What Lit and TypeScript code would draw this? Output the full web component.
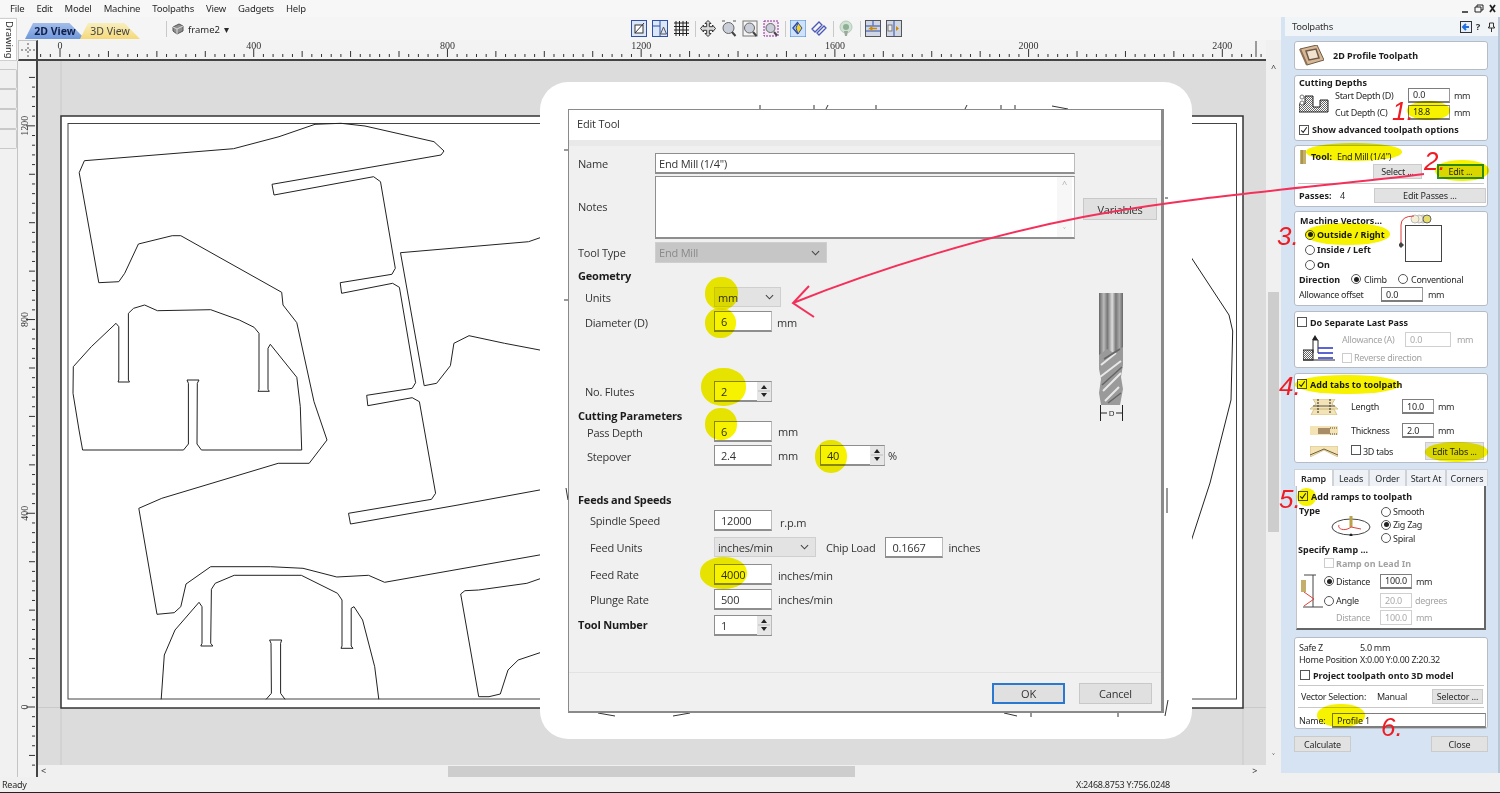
import { LitElement, html, svg, css, unsafeCSS } from 'lit';
import { customElement } from 'lit/decorators.js';

// small spacing helpers, used for the many one-off offsets in this dense form
let util = '';
for (let n = 0; n <= 500; n++) {
  util += `.w${n}{width:${n}px;flex:none}.h${n}{height:${n}px;flex:none}.ml${n}{margin-left:${n}px}.mt${n}{margin-top:${n}px}`;
}

const MENU = ['File', 'Edit', 'Model', 'Machine', 'Toolpaths', 'View', 'Gadgets', 'Help'];

// yellow marker blobs: x, y, w, h in page pixels
const MARKS = [
  [1407, 101, 43, 19], [1306, 143, 96, 18], [1435, 160, 54, 21], [1305, 223, 85, 22],
  [1295, 375, 105, 19], [1425, 442, 63, 20], [1297, 488, 19, 18], [1317, 704, 48, 23],
  [705, 277, 33, 33], [705, 308, 31, 30], [701, 368, 45, 38], [705, 408, 32, 32],
  [815, 440, 32, 33], [700, 557, 47, 32],
];

const NUMS: [string, number, number][] = [
  ['1.', 1392, 98], ['2.', 1424, 148], ['3.', 1277, 223],
  ['4.', 1279, 373], ['5.', 1279, 486], ['6.', 1381, 714],
];

// part outlines in page pixels, read off the reference
const SHAPES = [
  '84.4,160.7 233.5,148.7 279,136.7 315,124.3 341,123.3 365,126 434,141.7 444,151 441,155 272,184.3 274,195 373.6,176.7 380.5,181.7 395.3,268.3 391.9,274.3 340.2,282.7 341.6,293.3 392.6,283.3 399.4,287.3 415.6,382.7 412.2,388.3 366.7,395.3 367.8,405.7 412.2,397.7 419.4,401.7 435.6,493.3 431.5,499.3 348.5,513.3 350.5,524 458,505 545,489',
  '84.4,160.7 79.2,172.7 98.8,282.7 118.8,281.7 124.7,273.3 138.4,244 172.2,235.7 180.8,235.7 281.7,292.3 283,305 296.8,322.7 314,401.7 327,440 309.2,463.3 278.2,463.3 161.8,498.3 138.8,508.3 157,614.3 174.2,612.7 180.8,606.7 186,584 210.7,566.7 270.3,566.7 303,568.3 336.8,577 368.5,575.3 384.6,582.3 545,554',
  '116,323.3 118.8,326.7 118.8,380 118,382 129.5,382 128.4,380 128.4,313.3 133.6,308.3 144.6,305 157.4,310.7 210.7,309.7 239.3,320 254.1,327.3 259,333.3 259,389.3 258,391.3 269.3,391.3 268,389.3 268,348.3 270.3,344.3 296.8,377.3 300.3,406.7 301.7,450 201.4,450 197,444 197.3,383.3 199,380 187,380 188.4,383.3 188.4,444 183.5,450 82.6,450 79,430 73,393.3 73.3,366.7 91.3,346.7 116,323.3',
  '161.2,699.3 164.3,655 175,630 199,602.3 202,606.7 202,643.3 200.8,646 212.8,646 210.7,643.3 211.4,589.3 215.2,583.3 234.2,575.3 301.3,575.3 337.5,593.3 342,600 342,646 341,648.3 353,648.3 351.2,646 351.2,608.3 354,606.7 362.6,620 374.7,666.7 378.8,699.3',
  '266.2,699.3 271.4,693.3 271,643.3 269.6,640 281.7,640 280.6,643.3 280.6,693.3 285,699.3',
  '545,577 526.9,583.3 478.7,590 464.9,590.7 460.7,594 478.7,696.7 489,696.7 500.3,694 508,670 518.2,660 545,651',
  '545,236 528.6,241.7 400.5,252.7 424.2,385.7 436.6,383.3 450.4,365.7 453.9,343.3 469,335.7 504.5,343.3 545,351',
  '1185,248 1229,315 1232.7,331 1231,400 1210,483 1185,560',
];

const X0 = 60, Y0 = 707, K = 0.4843;

const TICK = html`<svg viewBox="0 0 10 10" width="8" height="8"><path d="M1.5 5.5 4 8 8.5 1.5" fill="none" stroke="#222" stroke-width="1.3"/></svg>`;

function ck(on = false, dis = false) {
  return html`<span class="ck ${dis ? 'dis' : ''}">${on ? TICK : ''}</span>`;
}
function rd(on = false) {
  return html`<span class="rd ${on ? 'on' : ''}"></span>`;
}
const CHEV = html`<svg viewBox="0 0 10 6" width="9" height="6"><path d="M1 1l4 4 4-4" fill="none" stroke="#444" stroke-width="1.2"/></svg>`;

function spin(v: string, w: string) {
  return html`<div class="fi spin ${w}"><span class="grow">${v}</span>
    <span class="step"><svg viewBox="0 0 14 20" width="14" height="20"><path d="M7 4l3 4H4zM7 16l3-4H4z" fill="#222"/><path d="M1 10h12" stroke="#bbb"/></svg></span></div>`;
}

@customElement('app-root')
export class AppRoot extends LitElement {
  static styles = [css`
    :host {
      display: block;
      position: relative;
      width: 1500px;
      height: 793px;
      overflow: hidden;
      background: #f0f0f0;
      font-family: "Noto Sans", "Open Sans", sans-serif;
      font-size: 9px;
      color: #2a2a2a;
    }
    .menu { height: 17px; display: flex; align-items: center; padding-left: 10px; gap: 12px; background: #f7f7f7; font-size: 9.5px; letter-spacing: -0.2px; position: relative; }
    .winbtns { margin-left: auto; margin-right: 4px; display: flex; }
    .main { display: flex; height: 760px; }
    .strip { width: 17px; flex: none; background: #f1f1f1; display: flex; flex-direction: column; }
    .drawtab { height: 41px; margin-top: 1px; background: #fff; border: 1px solid #cfcfcf; border-left: 0; writing-mode: vertical-rl; text-align: center; font-size: 9.5px; line-height: 14px; }
    .stub { height: 18px; border: 1px solid #c9c9c9; border-left: 0; border-radius: 0 2px 2px 0; background: #f0f0f0; }
    .stub.first { margin-top: 8px; }
    .work { width: 1264px; flex: none; display: grid; grid-template-columns: 21px 1228px 15px; grid-template-rows: 23px 21px 704px 12px; background: #f0f0f0; }
    .toolbar { grid-column: 1 / 4; display: flex; background: #f5f5f5; align-items: flex-start; }
    .tabs { display: flex; margin-left: 8px; margin-top: 6px; width: 127px; }
    .tab { height: 16px; width: 60px; text-align: center; font-size: 10.5px; line-height: 17px; clip-path: polygon(8px 0, 74% 0, 100% 100%, 0 100%); }
    .tab.two { background: linear-gradient(#a4bdea, #6f98dc); font-weight: 700; color: #10204a; }
    .tab.three { background: linear-gradient(#f8efbe, #f5d879); margin-left: -5px; color: #444; }
    .sep { width: 1px; height: 16px; background: #c9c9c9; margin-top: 4px; }
    .frame { display: flex; align-items: center; gap: 4px; margin-left: 5px; margin-top: 4px; height: 16px; font-size: 9.5px; width: 459px; }
    .tools { display: flex; margin-top: 3px; }
    .tools svg { width: 16px; height: 17px; margin-right: 5px; flex: none; }
    .tools .sep { margin: 1px 4px 0 1px; }
    .corner { background: #f3f3f3; border: 1px solid #c4c4c4; border-bottom: 2px solid #444; border-right: 2px solid #444; margin-left: 1px; }
    .corner svg, .rtop svg, .rleft svg, .canvas svg { display: block; }
    .rtop { grid-column: 2 / 3; border-bottom: 2px solid #444; box-sizing: border-box; background: #f3f3f3; overflow: hidden; }
    .rleft { grid-row: 3 / 5; background: #f2f2f2; border-left: 1px solid #c4c4c4; border-right: 2px solid #444; box-sizing: border-box; overflow: hidden; }
    .canvas { background: #dcdcdc; overflow: hidden; }
    .vs { background: #f0f0f0; display: flex; flex-direction: column; align-items: center; }
    .vs .thumb { width: 11px; height: 240px; background: #cdcdcd; margin-top: 217px; }
    .arrow { height: 14px; font-size: 9px; line-height: 14px; color: #333; }
    .hs { background: #f0f0f0; display: flex; align-items: center; grid-column: 2 / 3; }
    .hs .thumb { width: 407px; height: 11px; background: #cdcdcd; margin-left: 402px; }
    .status { height: 15px; border-bottom: 1px solid #222; display: flex; align-items: center; padding-left: 2px; font-size: 9px; letter-spacing: -0.25px; background: #f0f0f0; }
    .coords { margin-left: auto; margin-right: 330px; }

    .panel { width: 219px; height: 756px; flex: none; background: #d6e3f2; box-sizing: border-box; border-right: 2px solid #b9c6d6; }
    .phead { height: 19px; background: #f2f5f8; display: flex; align-items: center; padding-left: 7px; font-size: 9.5px; letter-spacing: -0.3px; color: #333; margin-left: 4px; }
    .phead .ico { margin-left: auto; margin-right: 3px; display: flex; align-items: center; gap: 4px; font-weight: 700; }
    .stack { padding: 5px 10px 0 13px; display: flex; flex-direction: column; }
    .card { background: #fff; border: 1px solid #b7bcc4; border-radius: 3px; box-sizing: border-box; position: relative; }
    .row { display: flex; align-items: center; }
    .row.top { align-items: flex-start; }
    .b { font-weight: 700; font-size: 9px; color: #1d1d1d; white-space: nowrap; }
    .t { white-space: nowrap; letter-spacing: -0.3px; }
    .grey { color: #a3a3a3; }
    .in { border: 1px solid #7d7d7d; border-bottom-width: 2px; border-right-color: #999; background: #fff; box-sizing: border-box; padding-left: 4px; display: flex; align-items: center; height: 15px; font-size: 9px; letter-spacing: -0.2px; flex: none; }
    .in.off { border: 1px solid #d0d0d0; color: #aaa; }
    .btn { background: #e2e2e2; border: 1px solid #cbcbcb; box-sizing: border-box; display: flex; align-items: center; justify-content: center; height: 15px; font-size: 9px; letter-spacing: -0.2px; flex: none; }
    .btn.green { border: 2px solid #2f8f2f; }
    .ck { width: 10px; height: 10px; border: 1px solid #555; background: #fff; box-sizing: border-box; display: inline-flex; align-items: center; justify-content: center; flex: none; }
    .ck.dis { border-color: #ccc; }
    .rd { width: 10px; height: 10px; border: 1px solid #555; border-radius: 50%; background: #fff; box-sizing: border-box; position: relative; flex: none; }
    .rd.on::after { content: ''; position: absolute; inset: 1.5px; border-radius: 50%; background: #222; }
    .hr { height: 1px; background: #c8c8c8; margin: 0 3px; }
    .ptabs { display: flex; height: 17px; }
    .ptab { border: 1px solid #cfd3d8; border-bottom: 0; background: #eef2f7; display: flex; align-items: center; justify-content: center; box-sizing: border-box; font-size: 9px; letter-spacing: -0.1px; }
    .ptab.on { background: #fff; font-weight: 600; }
    .rampbox { height: 144px; margin: 0 2px; background: #fff; border-left: 1px solid #c4c4c4; border-right: 2px solid #666; border-bottom: 2px solid #666; box-sizing: border-box; }
    .foot { display: flex; justify-content: space-between; margin-top: 7px; }
    .foot .btn { height: 16px; width: 57px; }
    .col { display: flex; flex-direction: column; }

    .modal { position: absolute; left: 540px; top: 82px; width: 652px; height: 657px; box-sizing: border-box; padding: 27px 28px 26px; background: #fff; border-radius: 28px; }
    .hole { position: absolute; left: 0; top: 0; }
    .dialog { position: relative; height: 100%; box-sizing: border-box; background: #f0f0f0; border: 1px solid #8a8a8a; border-right-width: 3px; border-bottom-width: 2px; display: flex; flex-direction: column; font-size: 11px; color: #333; font-family: "Open Sans", "Noto Sans", sans-serif; letter-spacing: -0.2px; }
    .dtitle { height: 30px; box-sizing: content-box; background: #fff; display: flex; align-items: center; padding: 0 0 0 8px; margin-bottom: 0; border-bottom: 6px solid #e9e9e9; flex: none; }
    .dtitle span { margin-top: -3px; }
    .form { padding: 7px 0 0 9px; flex: 1; }
    .f { display: flex; align-items: flex-start; }
    .lb { line-height: 21px; white-space: nowrap; flex: none; }
    .hd { font-weight: 700; font-size: 11px; color: #1c1c1c; line-height: 19px; white-space: nowrap; }
    .fi { height: 21px; background: #fff; border: 1px solid #8e8e8e; border-bottom-width: 2px; border-right-color: #bbb; box-sizing: border-box; padding-left: 6px; display: flex; align-items: center; flex: none; }
    .fi.name { padding-left: 3px; }
    .fs { height: 20px; background: #e3e3e3; border: 1px solid #cfcfcf; box-sizing: border-box; padding: 0 6px 0 3px; display: flex; align-items: center; justify-content: space-between; flex: none; }
    .fs.off { background: #c6c6c6; color: #8a8a8a; height: 21px; }
    .spin { padding-right: 0; }
    .grow { flex: 1; }
    .step { background: #e6e6e6; height: 19px; overflow: hidden; display: flex; align-items: center; }
    .ta { height: 63px; align-items: flex-start; justify-content: flex-end; padding: 0; }
    .sbar { width: 15px; height: 100%; display: flex; flex-direction: column; justify-content: space-between; align-items: center; color: #aaa; background: #f7f7f7; margin-right: 2px; font-size: 9px; }
    .var { height: 22px; background: #e0e0e0; border: 1px solid #c8c8c8; box-sizing: border-box; display: flex; align-items: center; justify-content: center; flex: none; }
    .cutter { margin-left: 317px; margin-top: 6px; }
    .dfoot { height: 39px; box-sizing: border-box; border-top: 1px solid #e2e2e2; flex: none; display: flex; gap: 14px; padding: 10px 0 0 423px; }
    .dfoot .var { height: 21px; width: 73px; }
    .dfoot .ok { border: 2px solid #2a78d0; }

    .mark { position: absolute; background: #f6f200; border-radius: 48%; mix-blend-mode: multiply; pointer-events: none; }
    .num { position: absolute; color: #ef1c24; font: italic 26px/26px "Liberation Sans", sans-serif; white-space: nowrap; }
    .over { position: absolute; left: 0; top: 0; pointer-events: none; }
  `, unsafeCSS(util)];

  private topRuler() {
    const marks = [];
    for (let v = -40; v <= 2480; v += 20) {
      const x = X0 - 38 + v * K;
      const big = v % 400 === 0, mid = v % 100 === 0;
      marks.push(svg`<line x1=${x} x2=${x} y1=${big ? 9 : mid ? 11 : 14} y2="17" stroke="#333"/>`);
      if (big) marks.push(svg`<text x=${x} y="9" text-anchor="middle" font-size="10" font-family="Liberation Serif" fill="#333">${v}</text>`);
    }
    return html`<svg width="1228" height="19">${marks}<line x1="1218" x2="1218" y1="1" y2="17" stroke="#444"/></svg>`;
  }

  private leftRuler() {
    const marks = [];
    for (let v = -120; v <= 1300; v += 20) {
      const y = Y0 - 61 - v * K;
      const big = v % 400 === 0, mid = v % 100 === 0;
      marks.push(svg`<line x1=${big ? 8 : mid ? 11 : 14} x2="17" y1=${y} y2=${y} stroke="#333"/>`);
      if (big) marks.push(svg`<text transform="translate(10 ${y}) rotate(-90)" text-anchor="middle" font-size="10" font-family="Liberation Serif" fill="#333">${v}</text>`);
    }
    return html`<svg width="18" height="716" viewBox="0 0 18 716">${marks}</svg>`;
  }

  private canvas() {
    return html`<svg width="1228" height="704" viewBox="38 61 1228 704">
      <path d="M61 61V765M38 707.5H1266M1243 708V765" stroke="#cacaca" fill="none"/>
      <rect x="61" y="116" width="1182" height="592" fill="#fff" stroke="#333" stroke-width="1.5"/>
      <rect x="68" y="123.5" width="1168.5" height="575.5" fill="#fff" stroke="#444" stroke-width="1"/>
      ${SHAPES.map((p) => svg`<polyline points=${p} fill="none" stroke="#222" stroke-width="1"/>`)}
    </svg>`;
  }

  private toolIcons() {
    const blue = '#2f4fa8';
    return html`<div class="tools">
      <svg viewBox="0 0 16 17"><rect x=".5" y=".5" width="15" height="16" fill="#dbe7f7" stroke="${blue}"/><rect x="4" y="5" width="8" height="8" fill="#fff" stroke="#333"/><path d="M4 13L13 3" stroke="#333"/></svg>
      <svg viewBox="0 0 16 17"><rect x=".5" y=".5" width="15" height="16" fill="#dbe7f7" stroke="${blue}"/><path d="M.5 6H8V16.5M8 .5V6" fill="none" stroke="${blue}"/><path d="M11.5 7l3 7h-6z" fill="none" stroke="#555"/></svg>
      <svg viewBox="0 0 16 17"><path d="M3 1v15M6.500 1v15M10 1v15M13.500 1v15M1 3h15M1 6.500h15M1 10h15M1 13.500h15" stroke="#222"/></svg>
      <span class="sep"></span>
      <svg viewBox="0 0 16 17"><path d="M8 .5l3 3H9.300v3.200h3.200V5l3 3.500-3 3.500v-1.700H9.300v3.200H11l-3 3-3-3h1.700v-3.200H3.500V12l-3-3.500 3-3.500v1.700h3.200V3.500H5z" fill="#d9d9d9" stroke="#333"/></svg>
      <svg viewBox="0 0 16 17"><circle cx="7.500" cy="8" r="5.500" fill="#c9ced8" stroke="#666"/><path d="M11 12l3.500 4" stroke="#444" stroke-width="2"/><path d="M1 1h3M12 1h3" stroke="#555"/></svg>
      <svg viewBox="0 0 16 17"><rect x="1" y="1" width="14" height="15" fill="none" stroke="#777"/><circle cx="7.500" cy="8" r="5" fill="#c9ced8" stroke="#666"/><path d="M11 12l3.500 4" stroke="#444" stroke-width="2"/></svg>
      <svg viewBox="0 0 16 17"><rect x="1" y="1" width="14" height="15" fill="#f2e9f2" stroke="#8a2d96" stroke-dasharray="2 1"/><circle cx="7.500" cy="8" r="4.500" fill="#c9ced8" stroke="#666"/><path d="M11 12l3 3.500" stroke="#444" stroke-width="2"/></svg>
      <span class="sep"></span>
      <svg viewBox="0 0 16 17"><rect width="16" height="17" fill="#cfe2fa" stroke="#3f83d6"/><path d="M8 2L3 8l5 6" fill="none" stroke="${blue}" stroke-width="1.500"/><path d="M8 3l4 5-4 6-2-6z" fill="#f4d21f" stroke="${blue}"/></svg>
      <svg viewBox="0 0 16 17"><path d="M1 9l7-7 3 3-7 7zM6 13l7-7 2 2-7 7z" fill="none" stroke="#4a58b8" stroke-width="1.300"/></svg>
      <span class="sep"></span>
      <svg viewBox="0 0 16 17"><circle cx="8" cy="7" r="6" fill="#cfe3d2" stroke="#b7c9bb"/><circle cx="8" cy="7" r="3" fill="#8fae93"/><path d="M6 11h4l-1 5H7z" fill="#9aa99c"/></svg>
      <span class="sep"></span>
      <svg viewBox="0 0 16 17"><rect x=".5" y=".5" width="15" height="16" fill="#cfd6e6" stroke="#555"/><path d="M.5 6h15M.5 11h15M8 .5v5" stroke="${blue}"/><path d="M12 8.500H5l2.500-2M5 8.500l2.500 2" fill="none" stroke="#d08a00" stroke-width="1.400"/></svg>
      <svg viewBox="0 0 16 17"><rect x=".5" y=".5" width="15" height="16" fill="#cfd6e6" stroke="#555"/><path d="M8 .5v16" stroke="${blue}"/><rect x="2" y="5" width="4" height="6" fill="#eee" stroke="#777"/><path d="M10 6l3 2.500-3 2.500z" fill="#d08a00"/></svg>
    </div>`;
  }

  private panel() {
    return html`<div class="panel">
      <div class="phead"><span>Toolpaths</span>
        <span class="ico">
          <svg width="12" height="12" viewBox="0 0 12 12"><rect x=".5" y=".5" width="11" height="11" fill="#e8f0fb" stroke="#333"/><path d="M9 6H4M6 3L3 6l3 3" fill="none" stroke="#1f6fe0" stroke-width="2"/></svg>
          <span>?</span>
          <svg class="ml4" width="7" height="10" viewBox="0 0 7 10"><path d="M1.500 1h4v4h1v1H.5V5h1zM3.500 6v4" fill="none" stroke="#333"/></svg>
        </span>
      </div>
      <div class="stack">
        <div class="card h29 row">
          <svg class="ml3" width="26" height="21" viewBox="0 0 26 21"><path d="M2 4L19 0l7 15-17 5z" fill="#d8b894" stroke="#6d5a48"/><path d="M8 6l10-2 3 9-10 2z" fill="#f1e2cf" stroke="#6d5a48" stroke-width="1.500"/><path d="M2 4l7 16" stroke="#8d7258" stroke-width="2"/></svg>
          <span class="b ml9">2D Profile Toolpath</span>
        </div>

        <div class="card h66 mt5">
          <div class="b ml4 h10">Cutting Depths</div>
          <div class="row">
            <svg class="ml4" width="31" height="19" viewBox="0 0 31 19"><defs><pattern id="ht" width="2" height="2" patternUnits="userSpaceOnUse"><path d="M0 2L2 0" stroke="#666"/></pattern></defs><path d="M0 10H6V2H14V13H21V6H29V18H0z" fill="url(#ht)" stroke="#222"/><circle cx="3" cy="3" r="2" fill="#fff" stroke="#777"/><circle cx="3" cy="9" r="2" fill="#fff" stroke="#777"/></svg>
            <div class="col ml5">
              <div class="row h18"><span class="t w73">Start Depth (D)</span><span class="in w42">0.0</span><span class="t ml4">mm</span></div>
              <div class="row h16"><span class="t w73">Cut Depth (C)</span><span class="in w42">18.8</span><span class="t ml4">mm</span></div>
            </div>
          </div>
          <div class="row mt3 ml4">${ck(true)}<span class="b ml3">Show advanced toolpath options</span></div>
        </div>

        <div class="card h62 mt4">
          <div class="row h15 mt3">
            <svg class="ml5" width="6" height="14" viewBox="0 0 6 14"><rect width="6" height="14" fill="#c4b06a"/><path d="M2 0v14" stroke="#8a7a3e"/></svg>
            <span class="b ml5">Tool:</span><span class="t ml5">End Mill (1/4")</span>
          </div>
          <div class="row h15">
            <span class="btn w49 ml78">Select ...</span><span class="btn w47 green ml15">Edit ...</span>
          </div>
          <div class="hr mt4"></div>
          <div class="row h15 mt4"><span class="b ml4 w41">Passes:</span><span class="t">4</span><span class="btn w112 ml29">Edit Passes ...</span></div>
        </div>

        <div class="card h95 mt4">
          <div class="row top h60">
            <div class="col w100">
              <div class="b ml5 mt2">Machine Vectors...</div>
              <div class="row h15 ml10">${rd(true)}<span class="b ml2">Outside / Right</span></div>
              <div class="row h15 ml10">${rd()}<span class="b ml2">Inside / Left</span></div>
              <div class="row h15 ml10">${rd()}<span class="b ml2">On</span></div>
            </div>
            <svg class="mt1 ml4" width="48" height="50" viewBox="0 0 48 50"><rect x="6.500" y="12.500" width="36" height="36" fill="#fff" stroke="#444"/><circle cx="24" cy="6" r="4" fill="#f5efd8" stroke="#bbb"/><circle cx="20" cy="6" r="4" fill="#f5efd8" stroke="#bbb"/><circle cx="16" cy="6" r="4" fill="#f5efd8" stroke="#bbb"/><circle cx="28" cy="6" r="4" fill="#e7dd6a" stroke="#666"/><path d="M15 3Q2 3 2 12V32" fill="none" stroke="#e23a3a"/><path d="M2 29l3 3-3 3-3-3z" fill="#444"/></svg>
          </div>
          <div class="row h14"><span class="b ml4 w52">Direction</span>${rd(true)}<span class="t ml3 w34">Climb</span>${rd()}<span class="t ml3">Conventional</span></div>
          <div class="row h15 mt1"><span class="t ml4 w82">Allowance offset</span><span class="in w42">0.0</span><span class="t ml5">mm</span></div>
        </div>

        <div class="card h57 mt5">
          <div class="row mt3 ml2 h14">${ck()}<span class="b ml3">Do Separate Last Pass</span></div>
          <div class="row">
            <svg class="ml8" width="32" height="28" viewBox="0 0 32 28"><path d="M0 27H32" stroke="#222"/><rect x="0" y="17" width="10" height="10" fill="url(#ht)" stroke="#222"/><path d="M10 20V7h5v13" fill="none" stroke="#222"/><path d="M15 15H30M15 20H30M15 25H30" stroke="#2833c9" stroke-width="1.300"/><path d="M9 7l3-5 3 5" fill="#222"/></svg>
            <div class="col ml7">
              <div class="row h20"><span class="t grey w63">Allowance (A)</span><span class="in off w46">0.0</span><span class="t grey ml6">mm</span></div>
              <div class="row h15 mt1">${ck(false, true)}<span class="t grey ml2">Reverse direction</span></div>
            </div>
          </div>
        </div>

        <div class="card h90 mt5">
          <div class="row h14 ml2 mt3">${ck(true)}<span class="b ml3">Add tabs to toolpath</span></div>
          <div class="row h23 mt4">
            <svg class="ml15" width="28" height="16" viewBox="0 0 28 16"><path d="M3 0h22l-3 5 6 5H0l6-5zM4 10h20l3 6H1z" fill="#f4e3b4" stroke="#d6c48e"/><path d="M8 0v15M20 0v15" stroke="#222" stroke-dasharray="2 1"/><path d="M3 7h22" stroke="#555"/></svg>
            <span class="t w51 ml13">Length</span><span class="in w32">10.0</span><span class="t ml4">mm</span>
          </div>
          <div class="row h21 mt2">
            <svg class="ml15" width="28" height="13" viewBox="0 0 28 13"><rect y="2" width="28" height="9" fill="#f4e3b4"/><rect x="8" y="4" width="12" height="6" fill="#a88d68"/><path d="M20 4h8M20 10h8" stroke="#444" stroke-dasharray="1 1"/></svg>
            <span class="t w51 ml13">Thickness</span><span class="in w32">2.0</span><span class="t ml4">mm</span>
          </div>
          <div class="row h20">
            <svg class="ml15" width="28" height="11" viewBox="0 0 28 11"><path d="M0 0h28v11L14 4 0 11z" fill="#f4e3b4" stroke="#d6c48e"/><path d="M0 9l14-6 14 6" fill="none" stroke="#6b5d3d"/></svg>
            <span class="ml13">${ck()}</span><span class="t ml2 w62">3D tabs</span><span class="btn w59 h18">Edit Tabs ...</span>
          </div>
        </div>

        <div class="ptabs mt6">
          <span class="ptab on w39">Ramp</span><span class="ptab w36">Leads</span><span class="ptab w37">Order</span><span class="ptab w40">Start At</span><span class="ptab w42">Corners</span>
        </div>
        <div class="rampbox">
          <div class="row h14 ml1 mt3">${ck(true)}<span class="b ml3">Add ramps to toolpath</span></div>
          <div class="row top h40">
            <div class="col w34"><span class="b ml2 mt1">Type</span></div>
            <svg class="mt11" width="40" height="22" viewBox="0 0 40 22"><ellipse cx="20" cy="13" rx="19" ry="8" fill="#fff" stroke="#444"/><path d="M20 2v11" stroke="#b9a24a" stroke-width="3"/><path d="M20 13c-6 5-14 2-12-2M20 13l10 2" fill="none" stroke="#e0413a"/><circle cx="20" cy="21" r="1.500" fill="#222"/></svg>
            <div class="col ml10 mt2">
              <div class="row h13">${rd()}<span class="t ml2">Smooth</span></div>
              <div class="row h13">${rd(true)}<span class="t ml2">Zig Zag</span></div>
              <div class="row h14">${rd()}<span class="t ml2">Spiral</span></div>
            </div>
          </div>
          <div class="b ml1">Specify Ramp ...</div>
          <div class="row">
            <svg class="ml4 w23" width="23" height="34" viewBox="0 0 23 34"><path d="M2 33h20M12 1V33M3 1h12" fill="none" stroke="#444"/><rect x="0" y="6" width="5" height="12" fill="#c4b06a"/><path d="M3 18l10 7-10 7" fill="none" stroke="#e0413a"/></svg>
            <div class="col">
              <div class="row h14">${ck(false, true)}<span class="b grey ml2">Ramp on Lead In</span></div>
              <div class="row h18 mt2">${rd(true)}<span class="t ml2 w44">Distance</span><span class="in w32">100.0</span><span class="t ml4">mm</span></div>
              <div class="row h17 mt2">${rd()}<span class="t ml2 w44">Angle</span><span class="in off w32">20.0</span><span class="t grey ml3">degrees</span></div>
              <div class="row h16"><span class="t grey ml12 w44">Distance</span><span class="in off w32">100.0</span><span class="t grey ml4">mm</span></div>
            </div>
          </div>
        </div>

        <div class="card h92 mt7">
          <div class="row h12 mt3"><span class="t ml4 w61">Safe Z</span><span class="t">5.0 mm</span></div>
          <div class="row h12"><span class="t ml4 w61">Home Position</span><span class="t">X:0.00 Y:0.00 Z:20.32</span></div>
          <div class="row h14 ml5 mt3">${ck()}<span class="b ml3">Project toolpath onto 3D model</span></div>
          <div class="hr mt3"></div>
          <div class="row h15 mt3"><span class="t ml6 w76">Vector Selection:</span><span class="t w55">Manual</span><span class="btn w51">Selector ...</span></div>
          <div class="hr mt3"></div>
          <div class="row h15 mt5"><span class="t ml4 w33">Name:</span><span class="in w154">Profile 1</span></div>
        </div>

        <div class="foot"><span class="btn">Calculate</span><span class="btn">Close</span></div>
      </div>
    </div>`;
  }

  private dialog() {
    return html`<div class="modal">
      <svg class="hole" width="652" height="657" viewBox="540 82 652 657">
        <path d="M760 109V105M814 109V105M826 109L828 105M876 109V105M965 109L967 105M1001 109V105M1015 109V105M1052 106L1068 109M598 713L615 716M673 716L690 713M1004 713L1017 716M1031 713V717M1118 713V717M1167 488V513M1168 700L1165 716M566 488L568 500M564 150H568M564 300H568M1165 198H1168" stroke="#333" fill="none"/>
      </svg>
      <div class="dialog">
        <div class="dtitle"><span>Edit Tool</span></div>
        <div class="form">
          <div class="f h23"><span class="lb w77">Name</span><span class="fi name w420">End Mill (1/4")</span></div>
          <div class="f h66"><span class="lb w77 mt20">Notes</span>
            <span class="fi ta w420"><span class="sbar"><span>^</span><span>˅</span></span></span>
            <span class="var w74 ml8 mt22">Variables</span></div>
          <div class="f h24"><span class="lb w77">Tool Type</span><span class="fs off w172"><span>End Mill</span>${CHEV}</span></div>
          <div class="f h21"><span class="hd">Geometry</span></div>
          <div class="f h24"><span class="lb w136"><span class="ml7">Units</span></span><span class="fs w67"><span>mm</span>${CHEV}</span>
            <svg class="cutter" width="26" height="130" viewBox="0 0 26 130">
              <defs><linearGradient id="sh"><stop offset="0" stop-color="#666"/><stop offset=".2" stop-color="#bbb"/><stop offset=".35" stop-color="#777"/><stop offset=".55" stop-color="#ddd"/><stop offset=".7" stop-color="#777"/><stop offset=".85" stop-color="#aaa"/><stop offset="1" stop-color="#666"/></linearGradient></defs>
              <rect x="1" width="24" height="62" fill="url(#sh)"/>
              <path d="M1 62L9 56 16 60 25 54V72L23 84 25 96 22 112H3L1 100 3 86 1 76z" fill="#9a9a9a"/>
              <path d="M3 72L18 60M2 84L23 68M5 98L23 80M7 108L21 94" stroke="#e8e8e8" stroke-width="2"/>
              <path d="M6 66L22 56M4 92L24 74M10 110L23 100" stroke="#666" stroke-width="1.500"/>
              <path d="M2.500 112V128M24.500 112V128M3 120H9M18 120H24" stroke="#222"/>
              <text x="13.500" y="123" font-size="8" text-anchor="middle" fill="#222">D</text>
            </svg></div>
          <div class="f h70"><span class="lb w136 mt1"><span class="ml7">Diameter (D)</span></span><span class="fi w58">6</span><span class="lb ml5 mt1">mm</span></div>
          <div class="f h25"><span class="lb w136"><span class="ml7">No. Flutes</span></span>${spin('2', 'w58')}</div>
          <div class="f h15"><span class="hd">Cutting Parameters</span></div>
          <div class="f h24"><span class="lb w136 mt1"><span class="ml9">Pass Depth</span></span><span class="fi w58">6</span><span class="lb ml6">mm</span></div>
          <div class="f h45"><span class="lb w136 mt1"><span class="ml9">Stepover</span></span><span class="fi w58">2.4</span><span class="lb ml6 w42">mm</span>${spin('40', 'w65')}<span class="lb ml3">%</span></div>
          <div class="f h20"><span class="hd">Feeds and Speeds</span></div>
          <div class="f h27"><span class="lb w136"><span class="ml12">Spindle Speed</span></span><span class="fi w58">12000</span><span class="lb ml8 mt2">r.p.m</span></div>
          <div class="f h27"><span class="lb w136"><span class="ml12">Feed Units</span></span><span class="fs w102"><span>inches/min</span>${CHEV}</span><span class="lb ml10">Chip Load</span><span class="fi w58 ml10">0.1667</span><span class="lb ml5">inches</span></div>
          <div class="f h25"><span class="lb w136"><span class="ml12">Feed Rate</span></span><span class="fi w58">4000</span><span class="lb ml6 mt1">inches/min</span></div>
          <div class="f h26"><span class="lb w136"><span class="ml12">Plunge Rate</span></span><span class="fi w58">500</span><span class="lb ml6">inches/min</span></div>
          <div class="f h21"><span class="hd w136">Tool Number</span>${spin('1', 'w58')}</div>
        </div>
        <div class="dfoot"><span class="var ok">OK</span><span class="var">Cancel</span></div>
      </div>
    </div>`;
  }

  render() {
    return html`
      <div class="menu">
        ${MENU.map((m) => html`<span>${m}</span>`)}
        <span class="winbtns">
          <svg width="36" height="10" viewBox="0 0 36 10"><path d="M2 8h6" stroke="#222" stroke-width="1.500"/><path d="M15 3h6v5h-6zM17 3V1h6v5h-2" fill="none" stroke="#222"/><path d="M30 1l5 7M35 1l-5 7" stroke="#222" stroke-width="1.800"/></svg>
        </span>
      </div>
      <div class="main">
        <div class="strip">
          <div class="drawtab">Drawing</div>
          <div class="stub first"></div><div class="stub"></div><div class="stub"></div><div class="stub"></div>
        </div>
        <div class="work">
          <div class="toolbar">
            <div class="tabs"><div class="tab two">2D View</div><div class="tab three">3D View</div></div>
            <span class="sep ml14"></span>
            <div class="frame">
              <svg width="12" height="12" viewBox="0 0 12 12"><path d="M1 4l6-3 4 2v5l-6 3-4-3z" fill="#8f8f8f" stroke="#555"/><path d="M1 4l4 2 6-3M5 6v5" fill="none" stroke="#ddd"/></svg>
              <span>frame2</span><span>▾</span>
            </div>
            ${this.toolIcons()}
          </div>
          <div class="corner"><svg width="17" height="18" viewBox="0 0 17 18"><path d="M9 2v14M2 9h14" stroke="#555" stroke-dasharray="2 2"/></svg></div>
          <div class="rtop">${this.topRuler()}</div>
          <div></div>
          <div class="rleft">${this.leftRuler()}</div>
          <div class="canvas">${this.canvas()}</div>
          <div class="vs"><span class="arrow">^</span><span class="thumb"></span><span class="arrow mt218">˅</span></div>
          <div class="hs"><span class="arrow ml3">&lt;</span><span class="thumb"></span><span class="arrow ml397">&gt;</span></div>
        </div>
        ${this.panel()}
      </div>
      <div class="status"><span>Ready</span><span class="coords">X:2468.8753 Y:756.0248</span></div>

      ${this.dialog()}

      ${MARKS.map(([x, y, w, h]) => html`<span class="mark" style="left:${x}px;top:${y}px;width:${w}px;height:${h}px"></span>`)}
      <svg class="over" width="1500" height="793">
        <path d="M1424 174C1330 186 1190 196 1083 217C990 235 880 268 793 303M809 286L793 303L814 317" fill="none" stroke="#f4305a" stroke-width="2"/>
      </svg>
      ${NUMS.map(([t, x, y]) => html`<span class="num" style="left:${x}px;top:${y}px">${t}</span>`)}
    `;
  }
}
